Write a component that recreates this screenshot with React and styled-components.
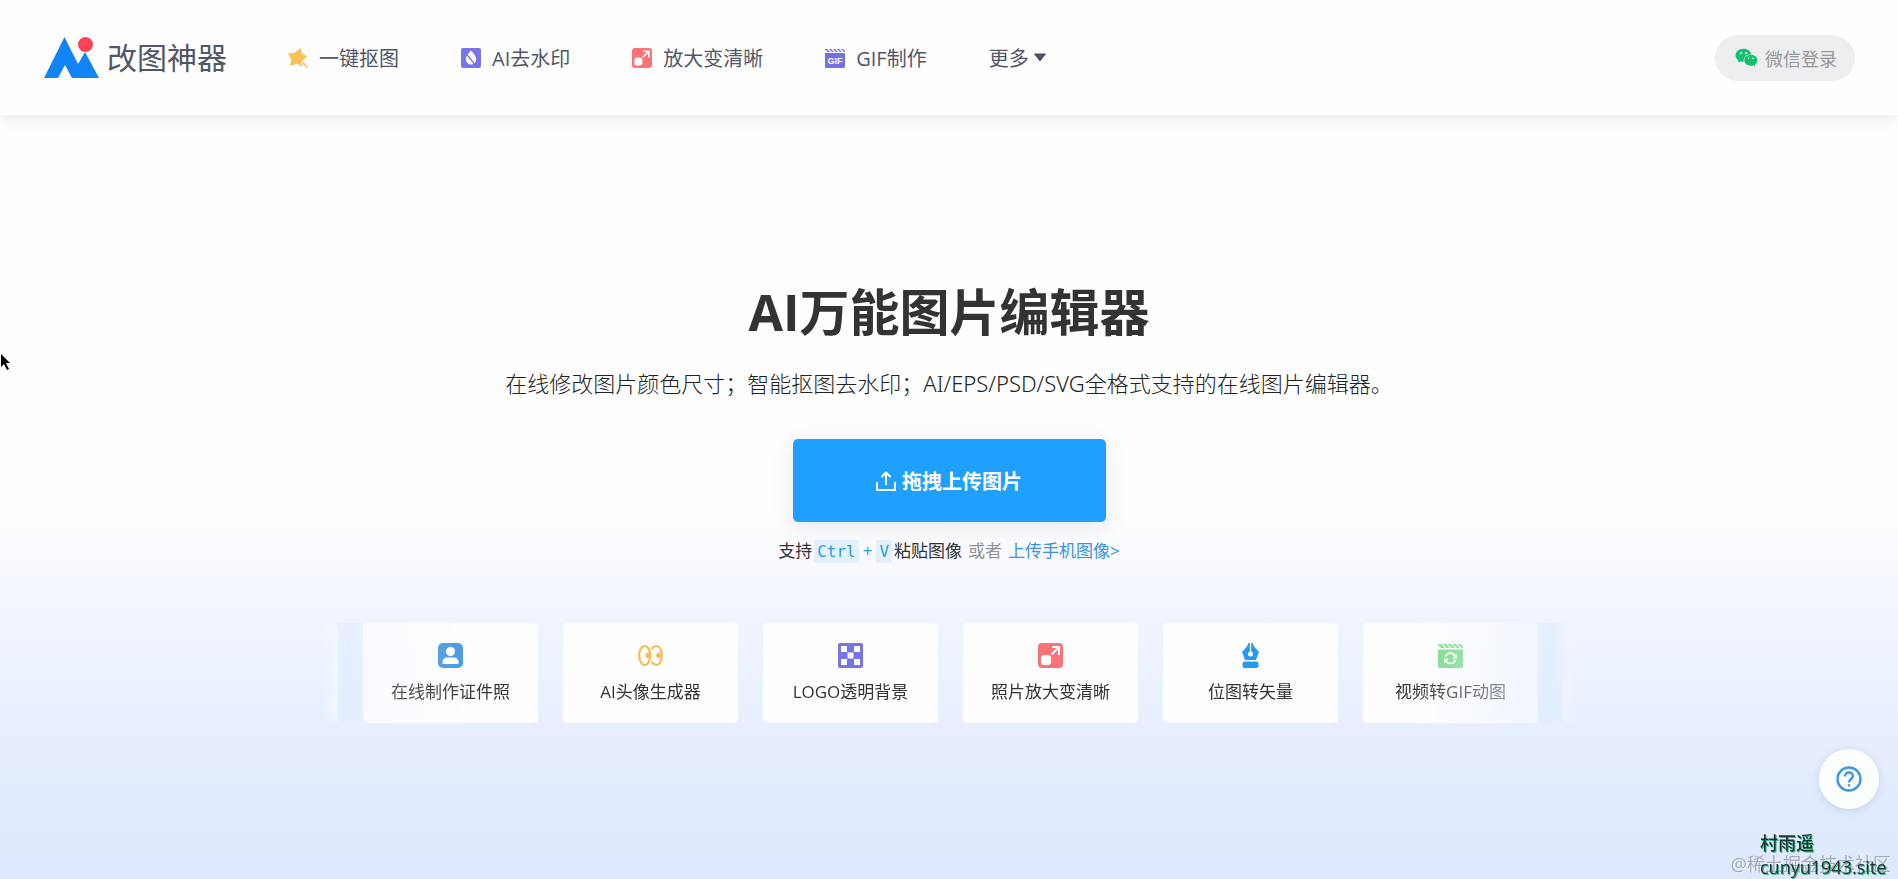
import React from "react";
import styled, { createGlobalStyle } from "styled-components";
import { AiFillWechat } from "react-icons/ai";

const Global = createGlobalStyle`
  * { box-sizing: border-box; }
  html, body { margin: 0; padding: 0; }
  body {
    font-family: "Open Sans", "Noto Sans CJK SC", sans-serif;
    color: #333;
    overflow-x: hidden;
  }
  a { text-decoration: none; color: inherit; }
  button { font: inherit; border: 0; cursor: pointer; }
  svg { display: block; flex: none; }
`;

const Page = styled.div`
  min-height: 100vh;
  display: flex;
  flex-direction: column;
  background: linear-gradient(to bottom, #fefefe 0%, #fefefe 57%, #f8faff 64%, #f0f4ff 71%, #e7effe 83%, #dde8fe 100%);
`;

const Header = styled.header`
  height: 115px;
  padding: 0 43px 0 44px;
  display: flex;
  align-items: center;
  background: #fefefe;
  box-shadow: 0 2px 16px rgba(0, 0, 0, 0.1);
`;

const Brand = styled.a`
  display: flex;
  align-items: center;
  gap: 8px;
  margin-right: 61px;
  font-size: 30px;
  line-height: 44px;
  color: #515767;
`;

const Nav = styled.nav`
  display: flex;
  align-items: center;
  gap: 62px;
`;

const NavLink = styled.a`
  display: flex;
  align-items: center;
  gap: ${(p) => p.$gap || 11}px;
  font-size: 20px;
  line-height: 28px;
  color: #515767;
  white-space: nowrap;
`;

const NavLabel = styled.span`
  padding-top: 2px;
`;

const Login = styled.button`
  margin-left: auto;
  height: 46px;
  padding: 0 18px 0 19px;
  display: flex;
  align-items: center;
  gap: 6px;
  border-radius: 23px;
  background: #eceef0;
  color: #96989b;
  font-size: 18px;
  white-space: nowrap;
  svg { color: #11c06a; }
`;

const Hero = styled.main`
  flex: 1;
  padding: 167px 20px 60px;
  display: flex;
  flex-direction: column;
  align-items: center;
`;

const Title = styled.h1`
  margin: 0 0 26px;
  font-size: 50px;
  line-height: 60px;
  font-weight: 700;
  color: #333;
`;

const Subtitle = styled.p`
  margin: 0 0 41px;
  font-family: "Noto Sans", "Noto Sans CJK SC", sans-serif;
  font-size: 22px;
  line-height: 30px;
  font-weight: 300;
  color: #222;
`;

const Upload = styled.button`
  width: 313px;
  height: 83px;
  display: flex;
  align-items: center;
  justify-content: center;
  gap: 6px;
  border-radius: 5px;
  background: #1fa0ff;
  color: #fff;
  font-size: 20px;
  font-weight: 700;
  box-shadow: 0 4px 24px rgba(0, 0, 0, 0.09);
`;

const Hint = styled.p`
  margin: 17px 0 60px;
  display: flex;
  align-items: center;
  font-size: 17px;
  line-height: 24px;
  white-space: pre;
`;

const Keys = styled.span`
  display: flex;
  align-items: center;
  gap: 4px;
  margin: 0 2px;
  color: #2f9be6;
`;

const Key = styled.kbd`
  padding: 0 3px;
  font-family: "DejaVu Sans Mono", monospace;
  font-size: 16px;
  line-height: 23px;
  background: #e2f1fd;
`;

const Muted = styled.span`
  margin: 0 6px;
  color: #909294;
`;

const PhoneLink = styled.a`
  && { color: #3b92e4; }
`;

const Carousel = styled.section`
  position: relative;
  width: 100%;
  max-width: 1250px;
  overflow: hidden;
  &::before, &::after {
    content: "";
    position: absolute;
    top: 0;
    bottom: 0;
    width: 160px;
    pointer-events: none;
  }
  &::before {
    left: 0;
    background: linear-gradient(to right, rgba(224, 237, 254, 0) 0, rgba(224, 237, 254, 0.7) 24px, rgba(224, 237, 254, 0.5) 38px, rgba(236, 244, 254, 0.5) 39px, rgba(240, 246, 254, 0) 100%);
  }
  &::after {
    right: 0;
    background: linear-gradient(to left, rgba(224, 237, 254, 0) 0, rgba(224, 237, 254, 0.7) 24px, rgba(224, 237, 254, 0.5) 36px, rgba(236, 244, 254, 0.5) 37px, rgba(240, 246, 254, 0) 100%);
  }
`;

const Track = styled.div`
  display: flex;
  justify-content: center;
  gap: 25px;
  padding-left: 3px;
  mask-image: linear-gradient(to right, rgba(0, 0, 0, 0.05), rgba(0, 0, 0, 0.5) 14px, rgba(0, 0, 0, 0.75) 39px, #000 170px, #000 calc(100% - 170px), rgba(0, 0, 0, 0.75) calc(100% - 39px), rgba(0, 0, 0, 0.5) calc(100% - 14px), rgba(0, 0, 0, 0.05));
`;

const Card = styled.a`
  flex: none;
  width: 175px;
  height: 100px;
  padding-top: 20px;
  display: flex;
  flex-direction: column;
  align-items: center;
  gap: 12px;
  border-radius: 5px;
  background: #fefeff;
  font-size: 17px;
  line-height: 24px;
  color: #333;
  white-space: nowrap;
`;

const CardEdge = styled.div`
  flex: none;
  width: 175px;
  height: 100px;
  border-radius: 5px;
  background: #fefeff;
`;

const Help = styled.button`
  position: fixed;
  right: 19px;
  bottom: 70px;
  width: 60px;
  height: 60px;
  padding: 0;
  display: grid;
  place-items: center;
  border-radius: 50%;
  background: #fcfefe;
  box-shadow: 0 2px 10px rgba(60, 80, 120, 0.16);
`;

const Signature = styled.div`
  position: fixed;
  right: 6px;
  bottom: 0;
  width: 132px;
  font-size: 18px;
  line-height: 24px;
  font-weight: 500;
  color: #16372f;
  text-shadow: 1px 1px 0 #3fb982;
  white-space: nowrap;
`;

const Community = styled.div`
  position: fixed;
  right: 7px;
  bottom: 3px;
  font-size: 18px;
  line-height: 24px;
  color: rgba(150, 158, 176, 0.85);
  text-shadow: 1px 1px 0 rgba(255, 255, 255, 0.6);
  white-space: nowrap;
`;

const Pointer = styled.div`
  position: fixed;
  left: 0;
  top: 353px;
`;

const Logo = () => (
  <svg width="55" height="41" viewBox="0 0 55 41">
    <path fill="#1284f6" d="M0 41 20.500 0 34 27 41 15 55 41H28L21 28 14 41Z" />
    <ellipse cx="41.500" cy="7.500" rx="7.500" ry="7.500" fill="#fe4155" />
  </svg>
);

const Wand = () => (
  <svg width="20" height="20" viewBox="0 0 20 20">
    <path fill="#f9c255" stroke="#f9c255" strokeWidth="1.500" strokeLinejoin="round" d="m12.500 1 .8 4.800L18 8.500l-4 3.200-.5 6-4.500-3-6 2.300 1-6L1 6l5.500-.5Z" />
    <path stroke="#fefefe" strokeWidth="3.500" d="m14 14 6 6" />
    <path stroke="#fbc983" strokeWidth="2" strokeLinecap="round" d="m15 15 4 4" />
  </svg>
);

const Drop = () => (
  <svg width="20" height="20" viewBox="0 0 20 20">
    <rect width="20" height="20" rx="2" fill="#7774ec" />
    <path fill="#fff" d="M10 2.500c3 3.300 5.200 5.700 5.200 8.800a5.200 5.200 0 0 1-10.400 0C4.800 8.200 7 5.800 10 2.500Z" />
    <path stroke="#7774ec" strokeWidth="1.300" d="m5 5.500 9 11" />
  </svg>
);

const Enlarge = ({ size }) => (
  <svg width={size} height={size} viewBox="0 0 25 25">
    <rect width="25" height="25" rx="4" fill="#fb7377" />
    <rect x="3" y="12" width="10" height="10" rx="3" fill="#fff" />
    <path d="M13.500 11.500 21 4M14 4h7v8" fill="none" stroke="#fff" strokeWidth="2" />
  </svg>
);

const GifBoard = () => (
  <svg width="20" height="20" viewBox="0 0 20 20">
    <path fill="#7272e6" d="M0 5h20v13.500a1.500 1.500 0 0 1-1.500 1.500h-17A1.500 1.500 0 0 1 0 18.500ZM0 1h2l3 3H3L0 1.500Zm4 0h2l3 3H7Zm4 0h2l3 3h-2Zm4 0h2l3 3h-2Zm4 0h2l2 2v1h-1Z" />
    <text x="10" y="15.500" textAnchor="middle" fill="#fff" fontFamily="Liberation Sans, sans-serif" fontSize="9" fontWeight="700">GIF</text>
  </svg>
);

const Caret = () => (
  <svg width="12" height="9" viewBox="0 0 12 9">
    <path fill="#515368" stroke="#515368" strokeLinejoin="round" d="M.5 1h11L6 8Z" />
  </svg>
);

const UploadIcon = () => (
  <svg width="20" height="20" viewBox="0 0 20 20" fill="none" stroke="#fff" strokeWidth="2">
    <path d="M1 11v8h18v-8M10 14V2M5.500 6 10 1.500 14.500 6" />
  </svg>
);

const Portrait = () => (
  <svg width="25" height="25" viewBox="0 0 25 25">
    <rect width="25" height="25" rx="5" fill="#4296df" />
    <circle cx="12.500" cy="8.500" r="4.500" fill="#fff" />
    <path fill="#fff" d="M4.500 21v-2c0-3 2-4.500 5-4.500h6c3 0 5 1.500 5 4.500v2Z" />
  </svg>
);

const Eyes = () => (
  <svg width="25" height="25" viewBox="0 0 25 25" fill="none" stroke="#f5bd55" strokeWidth="2.200">
    <ellipse cx="6.700" cy="12.500" rx="5.500" ry="9.500" />
    <path d="M13.500 6C15 3.500 16.500 3 18.500 3c3 0 5.300 4 5.300 9.500S21.500 22 18.500 22c-2 0-3.500-1-5-3.500" />
    <path fill="#f5bd55" stroke="none" d="M7.500 12.500c0-1.700 1.600-3 4-3v6c-2.400 0-4-1.300-4-3ZM18 12.500c0-1.700 1.800-3 4.500-3v6c-2.700 0-4.500-1.300-4.500-3Z" />
  </svg>
);

const Checker = () => (
  <svg width="25" height="25" viewBox="0 0 25 25">
    <rect width="25" height="25" rx="2" fill="#7674eb" />
    <path fill="#fff" d="M3 3h6v6H3ZM16 3h6v6h-6ZM9.500 9.500h6v6h-6ZM3 16h6v6H3ZM16 16h6v6h-6Z" />
  </svg>
);

const Pen = () => (
  <svg width="25" height="25" viewBox="0 0 25 25" fill="#2699f5">
    <path d="M10.500 0h4C16 4 18.500 6.500 21 9l-3 8H7L4 9C6.500 6.500 9 4 10.500 0Z" />
    <rect x="4.500" y="18.500" width="16" height="6.500" rx="2" />
    <circle cx="12.500" cy="11" r="2.500" fill="#fff" />
    <path stroke="#fff" strokeWidth="1.300" d="M12.500 0v10" />
  </svg>
);

const VideoBoard = () => (
  <svg width="25" height="25" viewBox="0 0 25 25">
    <path fill="#77d984" d="M0 6.500h25V23.500a1.500 1.500 0 0 1-1.500 1.500h-22A1.500 1.500 0 0 1 0 23.500ZM0 1h3l4 4H3L0 2Zm4.500 0h3.500l4 4H8.500Zm5 0h3.500l4 4h-3.500Zm5 0h3.500l4 4h-3.500Zm5 0H22l3 2.500V5h-1.500Z" />
    <path fill="none" stroke="#fff" strokeWidth="1.600" d="M7.500 13.500a5.300 5.300 0 0 1 9.500-.8M17.500 17a5.300 5.300 0 0 1-9.500 1" />
    <path fill="#fff" d="M18.800 10.500v5h-4.300ZM6.200 20.500v-5h4.300Z" />
  </svg>
);

const HelpIcon = () => (
  <svg width="26" height="26" viewBox="0 0 26 26" fill="none" stroke="#3c98e2" strokeWidth="2.400">
    <circle cx="13" cy="13" r="11.500" />
    <path d="M9 10.500C9 8 10.800 6.500 13 6.500s4 1.500 4 3.700c0 2.700-4 3-4 6.300" />
    <path d="M13 18.200v2.300" />
  </svg>
);

const Cursor = () => (
  <svg width="11" height="18" viewBox="0 0 11 18">
    <path d="M1 1v13l3-3 3 6 2-1-3-6h4Z" fill="#000" />
  </svg>
);

const navItems = [
  { label: "一键抠图", icon: <Wand /> },
  { label: "AI去水印", icon: <Drop /> },
  { label: "放大变清晰", icon: <Enlarge size={20} /> },
  { label: "GIF制作", icon: <GifBoard /> },
];

const tools = [
  { label: "在线制作证件照", icon: <Portrait /> },
  { label: "AI头像生成器", icon: <Eyes /> },
  { label: "LOGO透明背景", icon: <Checker /> },
  { label: "照片放大变清晰", icon: <Enlarge size={25} /> },
  { label: "位图转矢量", icon: <Pen /> },
  { label: "视频转GIF动图", icon: <VideoBoard /> },
];

export default function App() {
  return (
    <>
      <Global />
      <Page>
        <Header>
          <Brand href="#">
            <Logo />
            改图神器
          </Brand>
          <Nav>
            {navItems.map((item) => (
              <NavLink href="#" key={item.label}>
                {item.icon}
                <NavLabel>{item.label}</NavLabel>
              </NavLink>
            ))}
            <NavLink href="#" $gap={5}>
              <NavLabel>更多</NavLabel>
              <Caret />
            </NavLink>
          </Nav>
          <Login type="button">
            <AiFillWechat size={25} />
            微信登录
          </Login>
        </Header>
        <Hero>
          <Title>AI万能图片编辑器</Title>
          <Subtitle>在线修改图片颜色尺寸；智能抠图去水印；AI/EPS/PSD/SVG全格式支持的在线图片编辑器。</Subtitle>
          <Upload type="button">
            <UploadIcon />
            拖拽上传图片
          </Upload>
          <Hint>
            支持
            <Keys>
              <Key>Ctrl</Key>+<Key>V</Key>
            </Keys>
            粘贴图像
            <Muted>或者</Muted>
            <PhoneLink href="#">上传手机图像&gt;</PhoneLink>
          </Hint>
          <Carousel>
            <Track>
              <CardEdge />
              {tools.map((tool) => (
                <Card href="#" key={tool.label}>
                  {tool.icon}
                  {tool.label}
                </Card>
              ))}
              <CardEdge />
            </Track>
          </Carousel>
        </Hero>
      </Page>
      <Help type="button" aria-label="帮助">
        <HelpIcon />
      </Help>
      <Community>@稀土掘金技术社区</Community>
      <Signature>
        村雨遥
        <br />
        cunyu1943.site
      </Signature>
      <Pointer>
        <Cursor />
      </Pointer>
    </>
  );
}
